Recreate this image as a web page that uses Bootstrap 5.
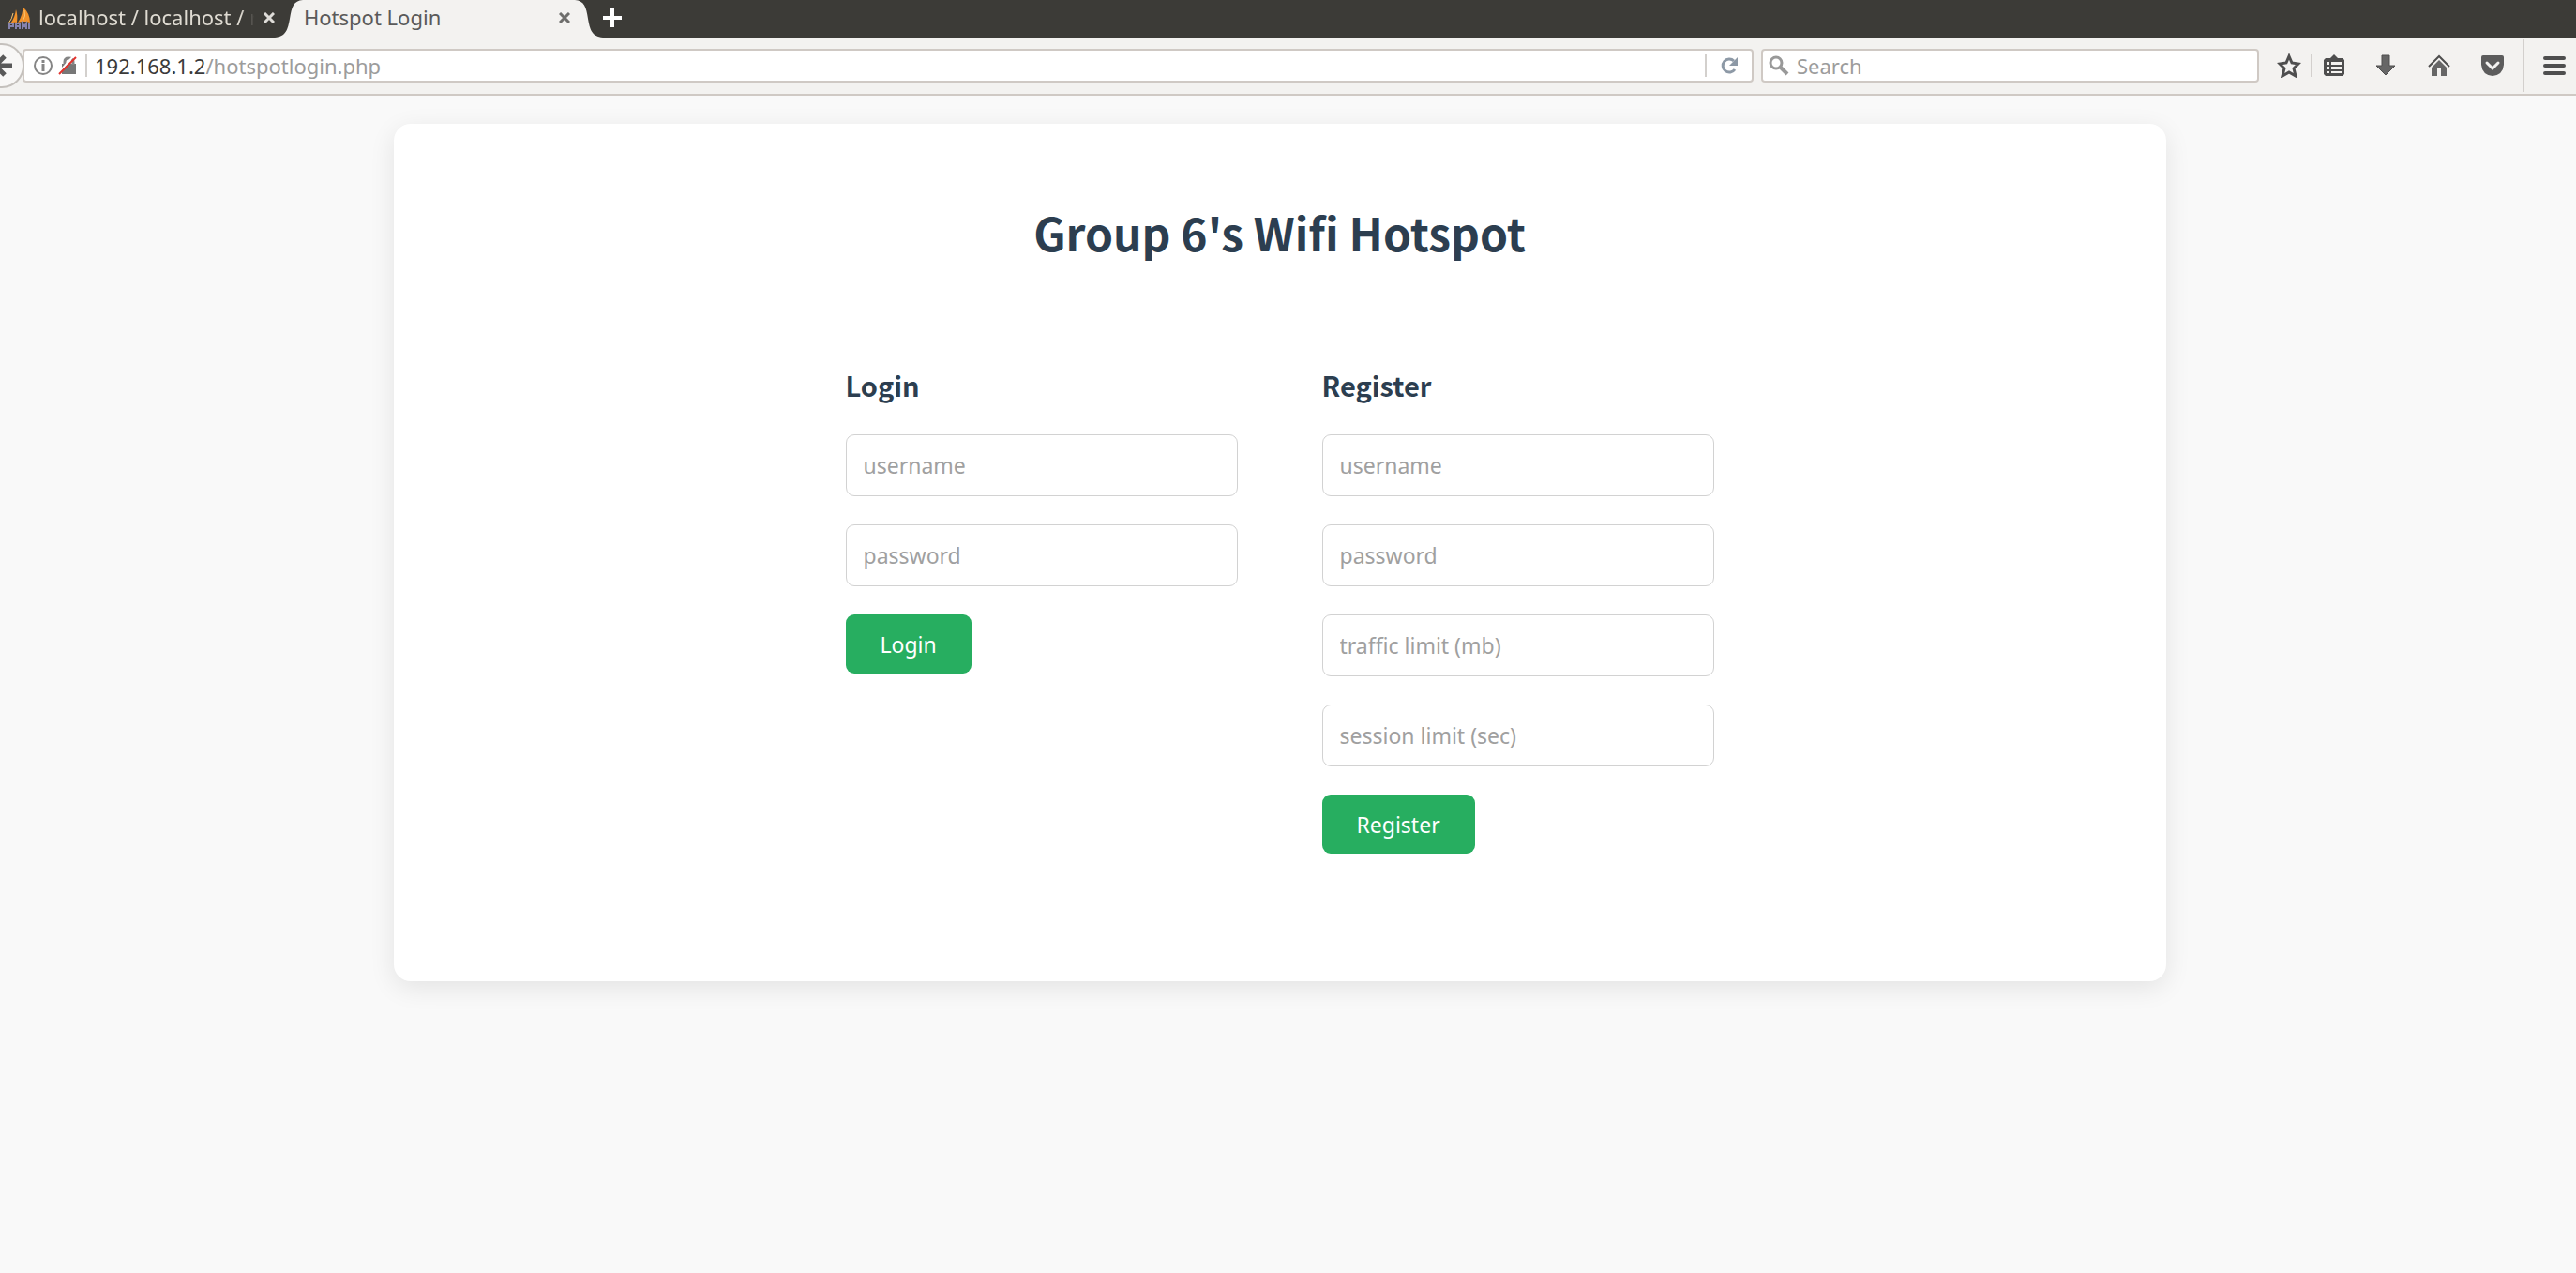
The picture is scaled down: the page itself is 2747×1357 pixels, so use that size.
<!DOCTYPE html>
<html lang="en">
<head>
<meta charset="utf-8">
<meta name="viewport" content="width=device-width, initial-scale=1">
<title>Hotspot Login</title>
<link href="https://cdn.jsdelivr.net/npm/bootstrap@5.3.0/dist/css/bootstrap.min.css" rel="stylesheet">
<style>
  :root { --chrome: #f3f2f0; --line: #cfc9c4; --ink: #2c3e50; --green: #27ae60; }
  body { font-family: "Noto Sans", sans-serif; font-size: 22px; line-height: 30px; background: #f9f9f9; overflow-x: hidden; }
  button.plain { border: 0; background: none; padding: 0; display: flex; align-items: center; justify-content: center; flex: none; }
  svg { display: block; flex: none; }

  .tab-strip { height: 40px; background: #3c3b37; color: #dfdbd2; }
  .tab-idle { width: 293px; height: 38px; padding-left: 8px; }
  .tab-idle .tab-name { margin-left: 7px; width: 238px; -webkit-mask-image: linear-gradient(90deg, #000 216px, transparent 230px); mask-image: linear-gradient(90deg, #000 216px, transparent 230px); }
  .tab-name { white-space: nowrap; line-height: 36px; height: 38px; color: inherit; text-decoration: none; }
  .tab-open { width: 290px; height: 40px; background: var(--chrome); color: #5a5a5a; padding: 0 5px 0 1px; }
  .tab-close { width: 12px; height: 38px; }
  .tab-new { width: 20px; height: 38px; }

  .tool-bar { height: 62px; background: var(--chrome); border-bottom: 2px solid var(--line); }
  .back-btn { width: 28px; height: 48px; margin-right: -4px; overflow: hidden; z-index: 1; position: relative; }
  .field-box { height: 36px; background: #fff; border: 2px solid var(--line); border-radius: 4px; }
  .address { padding-left: 9px; }
  .address label { color: #3a3a3a; }
  .field-box input { border: 0; outline: 0; padding: 0; background: none; min-width: 0; color: #9c9c9c; line-height: 30px; }
  .rule { width: 2px; height: 24px; background: #d3d0cd; flex: none; }
  .reload { width: 48px; }
  .search { width: 531px; padding-left: 6px; }
  .search input::placeholder { color: #9c9c9c; opacity: 1; }
  .tool { width: 57px; height: 48px; }
  .tool-star { width: 47px; }
  .tool-list { width: 49px; }
  .tool-pocket { width: 61px; }
  .tool-menu { width: 55px; }
  .tall { height: 56px; }

  main { padding: 30px 18px 60px 0; }
  .portal { max-width: 1890px; margin: 0 auto; padding: 85px 24px 136px; background: #fff; border-radius: 18px; box-shadow: 0 7px 28px rgba(0,0,0,.09); }
  .portal h1, .portal h2 { font-family: "Noto Sans CJK SC", sans-serif; font-weight: 700; color: var(--ink); }
  .portal h1 { font-size: 48px; line-height: 60px; margin-bottom: 113px; text-align: center; }
  .portal h2 { font-size: 29px; line-height: 40px; margin-bottom: 33px; }
  .forms { gap: 90px; }
  .forms form { width: 418px; }
  .forms .form-control { height: 66px; margin-bottom: 30px; padding: 0 18px; font-size: 23px; border: 1px solid #d2d2d2; border-radius: 9px; }
  .forms .form-control::placeholder { color: #a0a0a0; }
  .forms .btn { height: 63px; padding: 0 37px; font-size: 23px; line-height: 30px; border: 0; border-radius: 9px; background: var(--green); color: #fff; }
</style>
<script src="https://cdn.jsdelivr.net/npm/bootstrap@5.3.0/dist/js/bootstrap.bundle.min.js"></script>
</head>
<body>
<header>
  <nav class="tab-strip d-flex" aria-label="Tabs">
    <div class="tab-idle d-flex align-items-center">
      <svg width="26" height="26" viewBox="0 0 26 26">
        <path d="M9 4Q8 13 3 19Q7 17 10 18Q11 10 9 4ZM16 1Q17 9 11 18Q18 16 24 18Q24 8 16 1Z" fill="#f0922b"/>
        <path d="M6 8Q5 14 1 19M18 5Q20 11 16 17" stroke="#f8c471" fill="none"/>
        <path d="M2 25V19H6V22H2M9 25V19H13V25M9 22H13M16 25V19L18 22L20 19V25M23 19V25" stroke="#8583ad" stroke-width="2" fill="none"/>
      </svg>
      <a class="tab-name" href="#">localhost / localhost / r</a>
      <button class="plain tab-close ms-auto" aria-label="Close tab"><svg width="12" height="12" viewBox="0 0 12 12"><path d="M1 1L11 11M11 1L1 11" stroke="#dedcd8" stroke-width="3"/></svg></button>
    </div>
    <svg width="30" height="40" viewBox="0 0 30 40"><path d="M0 40C12 39 14 31 16 20C18 7 20 1 30 0V40Z" fill="#f3f2f0"/></svg>
    <div class="tab-open d-flex align-items-start">
      <a class="tab-name" href="#">Hotspot Login</a>
      <button class="plain tab-close ms-auto" aria-label="Close tab"><svg width="12" height="12" viewBox="0 0 12 12"><path d="M1 1L11 11M11 1L1 11" stroke="#6e6e6c" stroke-width="3"/></svg></button>
    </div>
    <svg width="30" height="40" viewBox="0 0 30 40"><path d="M30 40C18 39 16 31 14 20C12 7 10 1 0 0V40Z" fill="#f3f2f0"/></svg>
    <button class="plain tab-new" aria-label="New tab"><svg width="20" height="20" viewBox="0 0 20 20"><path d="M10 0V20M0 10H20" stroke="#fff" stroke-width="4"/></svg></button>
  </nav>

  <div class="tool-bar d-flex align-items-center">
    <button class="plain back-btn justify-content-start" aria-label="Back"><svg width="28" height="48" viewBox="0 0 28 48"><circle cx="2" cy="24" r="23" fill="#f8f7f6" stroke="#c4c0bc" stroke-width="2"/><path d="M13 24H-4M5 14L-5 24L5 34" fill="none" stroke="#595959" stroke-width="5"/></svg></button>
    <div class="field-box address d-flex align-items-center flex-grow-1">
      <svg width="22" height="22" viewBox="0 0 22 22"><circle cx="11" cy="11" r="9" fill="none" stroke="#858585" stroke-width="2"/><path d="M11 9V17M11 5V8" stroke="#858585" stroke-width="3"/></svg>
      <svg class="ms-1 me-2" width="22" height="22" viewBox="0 0 22 22"><path d="M5 9H20V20H5Z" fill="#777"/><path d="M8 10V7Q8 3 12 3Q17 3 17 7V10" fill="none" stroke="#858585" stroke-width="3"/><path d="M1 19L18 0" stroke="#fff" stroke-width="2"/><path d="M2 20L20 2" stroke="#e2322d" stroke-width="2"/></svg>
      <span class="rule me-2"></span>
      <label for="url">192.168.1.2</label>
      <input id="url" class="flex-grow-1" type="text" value="/hotspotlogin.php">
      <span class="rule"></span>
      <button class="plain reload" aria-label="Reload"><svg width="20" height="20" viewBox="0 0 20 20"><path d="M15 5A7 7 0 1 0 16 14" fill="none" stroke="#8d99a6" stroke-width="3"/><path d="M19 1V10H10Z" fill="#8d99a6"/></svg></button>
    </div>
    <div class="field-box search d-flex align-items-center ms-2">
      <svg width="22" height="22" viewBox="0 0 22 22"><circle cx="8" cy="8" r="6" fill="none" stroke="#999" stroke-width="3"/><path d="M12 12L20 20" stroke="#999" stroke-width="4"/></svg>
      <input class="ms-2 flex-grow-1" type="text" placeholder="Search" aria-label="Search">
    </div>
    <div class="d-flex align-items-center ps-2">
      <button class="plain tool tool-star" aria-label="Bookmark"><svg width="26" height="26" viewBox="0 0 26 26"><path d="M13 3L16 10L23 11L18 16L20 24L13 20L6 24L8 16L3 11L10 10Z" fill="none" stroke="#4e4e4e" stroke-width="3"/></svg></button>
      <span class="rule"></span>
      <button class="plain tool tool-list pe-1" aria-label="Bookmarks list"><svg width="22" height="24" viewBox="0 0 22 24"><path d="M2 4H7L11 0L15 4H20L22 6V21L20 23H2L0 21V6Z" fill="#4e4e4e"/><path d="M3 8H6V11H3ZM8 8H19V11H8ZM3 13H6V16H3ZM8 13H19V16H8ZM3 18H6V20H3ZM8 18H19V20H8Z" fill="#f3f2f0"/></svg></button>
      <button class="plain tool" aria-label="Downloads"><svg width="22" height="24" viewBox="0 0 22 24"><path d="M7 1H15V12H21L11 22L1 12H7Z" fill="#666" stroke="#4e4e4e"/></svg></button>
      <button class="plain tool" aria-label="Home"><svg width="24" height="24" viewBox="0 0 24 24"><path d="M1 13L12 2L23 13" fill="none" stroke="#4e4e4e" stroke-width="2"/><path d="M4 14L12 6L20 14V23H14V15H10V23H4Z" fill="#666"/></svg></button>
      <button class="plain tool tool-pocket pe-1" aria-label="Pocket"><svg width="26" height="24" viewBox="0 0 26 24"><path d="M3 1H23Q25 1 25 3V11Q24 22 13 23Q2 22 1 11V3Q1 1 3 1Z" fill="#5c5c5c"/><path d="M7 9L13 15L19 9" fill="none" stroke="#f3f2f0" stroke-width="3" stroke-linecap="round"/></svg></button>
      <span class="rule tall"></span>
      <button class="plain tool tool-menu ps-2" aria-label="Menu"><svg width="24" height="22" viewBox="0 0 24 22"><path d="M2 3H22M2 11H22M2 19H22" stroke="#4e4e4e" stroke-width="4" stroke-linecap="round"/></svg></button>
    </div>
  </div>
</header>

<main>
  <section class="portal">
    <h1>Group 6's Wifi Hotspot</h1>
    <div class="forms d-flex flex-wrap justify-content-center align-items-start">
      <form>
        <h2>Login</h2>
        <input class="form-control" type="text" placeholder="username" aria-label="username">
        <input class="form-control" type="password" placeholder="password" aria-label="password">
        <button class="btn" type="button">Login</button>
      </form>
      <form>
        <h2>Register</h2>
        <input class="form-control" type="text" placeholder="username" aria-label="username">
        <input class="form-control" type="password" placeholder="password" aria-label="password">
        <input class="form-control" type="text" placeholder="traffic limit (mb)" aria-label="traffic limit (mb)">
        <input class="form-control" type="text" placeholder="session limit (sec)" aria-label="session limit (sec)">
        <button class="btn" type="button">Register</button>
      </form>
    </div>
  </section>
</main>
</body>
</html>
